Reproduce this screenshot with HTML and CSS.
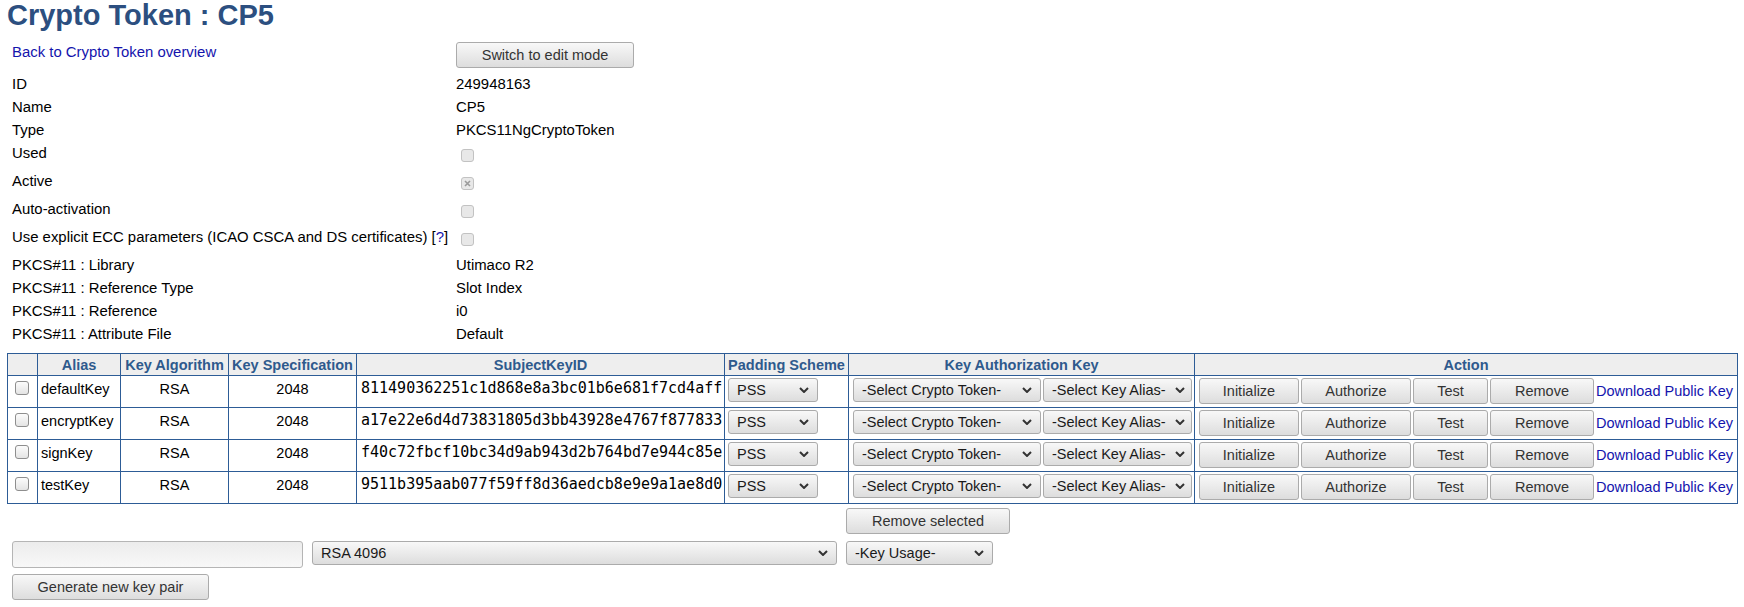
FILE: index.html
```html
<!DOCTYPE html>
<html>
<head>
<meta charset="utf-8">
<title>Crypto Token : CP5</title>
<link rel="stylesheet" href="styles.css">
</head>
<body>
<h1 class="title">Crypto Token : CP5</h1>

<div class="info">
  <div class="lbl"><a href="#">Back to Crypto Token overview</a></div>
  <div class="val"><button class="btn btn-edit">Switch to edit mode</button></div>

  <div class="lbl">ID</div><div class="val">249948163</div>
  <div class="lbl">Name</div><div class="val">CP5</div>
  <div class="lbl">Type</div><div class="val">PKCS11NgCryptoToken</div>

  <div class="lbl">Used</div><div class="val cbv"><span class="chk dis"></span></div>
  <div class="lbl">Active</div><div class="val cbv"><span class="chk dis"><svg width="7" height="7" viewBox="0 0 7 7"><path d="M1 1L6 6M6 1L1 6" stroke="#9a9a9a" stroke-width="1.6"/></svg></span></div>
  <div class="lbl">Auto-activation</div><div class="val cbv"><span class="chk dis"></span></div>
  <div class="lbl">Use explicit ECC parameters (ICAO CSCA and DS certificates) [<a href="#">?</a>]</div><div class="val cbv"><span class="chk dis"></span></div>

  <div class="lbl">PKCS#11 : Library</div><div class="val">Utimaco R2</div>
  <div class="lbl">PKCS#11 : Reference Type</div><div class="val">Slot Index</div>
  <div class="lbl">PKCS#11 : Reference</div><div class="val">i0</div>
  <div class="lbl">PKCS#11 : Attribute File</div><div class="val">Default</div>
</div>

<table class="keys">
  <colgroup>
    <col class="w0"><col class="w1"><col class="w2"><col class="w3"><col class="w4"><col class="w5"><col class="w6"><col class="w7">
  </colgroup>
  <thead>
    <tr>
      <th></th><th>Alias</th><th>Key Algorithm</th><th>Key Specification</th><th>SubjectKeyID</th><th>Padding Scheme</th><th>Key Authorization Key</th><th>Action</th>
    </tr>
  </thead>
  <tbody>
    <tr>
      <td class="c-chk"><span class="chk"></span></td>
      <td class="c-txt">defaultKey</td>
      <td class="c-txt c-center">RSA</td>
      <td class="c-txt c-center">2048</td>
      <td class="c-mono">811490362251c1d868e8a3bc01b6e681f7cd4aff</td>
      <td class="c-ctl"><div class="row pad"><span class="sel s-pss"><select><option>PSS</option></select><svg class="chev" width="10" height="6" viewBox="0 0 10 6"><path d="M1 1L5 5L9 1" fill="none" stroke="#333" stroke-width="2"/></svg></span></div></td>
      <td class="c-ctl"><div class="row auth"><span class="sel s-tok"><select><option>-Select Crypto Token-</option></select><svg class="chev" width="10" height="6" viewBox="0 0 10 6"><path d="M1 1L5 5L9 1" fill="none" stroke="#333" stroke-width="2"/></svg></span><span class="sel s-ali"><select><option>-Select Key Alias-</option></select><svg class="chev" width="10" height="6" viewBox="0 0 10 6"><path d="M1 1L5 5L9 1" fill="none" stroke="#333" stroke-width="2"/></svg></span></div></td>
      <td class="c-ctl"><div class="row act"><button class="btn b-init">Initialize</button><button class="btn b-auth">Authorize</button><button class="btn b-test">Test</button><button class="btn b-rem">Remove</button><a href="#" class="dl">Download Public Key</a></div></td>
    </tr>
    <tr>
      <td class="c-chk"><span class="chk"></span></td>
      <td class="c-txt">encryptKey</td>
      <td class="c-txt c-center">RSA</td>
      <td class="c-txt c-center">2048</td>
      <td class="c-mono">a17e22e6d4d73831805d3bb43928e4767f877833</td>
      <td class="c-ctl"><div class="row pad"><span class="sel s-pss"><select><option>PSS</option></select><svg class="chev" width="10" height="6" viewBox="0 0 10 6"><path d="M1 1L5 5L9 1" fill="none" stroke="#333" stroke-width="2"/></svg></span></div></td>
      <td class="c-ctl"><div class="row auth"><span class="sel s-tok"><select><option>-Select Crypto Token-</option></select><svg class="chev" width="10" height="6" viewBox="0 0 10 6"><path d="M1 1L5 5L9 1" fill="none" stroke="#333" stroke-width="2"/></svg></span><span class="sel s-ali"><select><option>-Select Key Alias-</option></select><svg class="chev" width="10" height="6" viewBox="0 0 10 6"><path d="M1 1L5 5L9 1" fill="none" stroke="#333" stroke-width="2"/></svg></span></div></td>
      <td class="c-ctl"><div class="row act"><button class="btn b-init">Initialize</button><button class="btn b-auth">Authorize</button><button class="btn b-test">Test</button><button class="btn b-rem">Remove</button><a href="#" class="dl">Download Public Key</a></div></td>
    </tr>
    <tr>
      <td class="c-chk"><span class="chk"></span></td>
      <td class="c-txt">signKey</td>
      <td class="c-txt c-center">RSA</td>
      <td class="c-txt c-center">2048</td>
      <td class="c-mono">f40c72fbcf10bc34d9ab943d2b764bd7e944c85e</td>
      <td class="c-ctl"><div class="row pad"><span class="sel s-pss"><select><option>PSS</option></select><svg class="chev" width="10" height="6" viewBox="0 0 10 6"><path d="M1 1L5 5L9 1" fill="none" stroke="#333" stroke-width="2"/></svg></span></div></td>
      <td class="c-ctl"><div class="row auth"><span class="sel s-tok"><select><option>-Select Crypto Token-</option></select><svg class="chev" width="10" height="6" viewBox="0 0 10 6"><path d="M1 1L5 5L9 1" fill="none" stroke="#333" stroke-width="2"/></svg></span><span class="sel s-ali"><select><option>-Select Key Alias-</option></select><svg class="chev" width="10" height="6" viewBox="0 0 10 6"><path d="M1 1L5 5L9 1" fill="none" stroke="#333" stroke-width="2"/></svg></span></div></td>
      <td class="c-ctl"><div class="row act"><button class="btn b-init">Initialize</button><button class="btn b-auth">Authorize</button><button class="btn b-test">Test</button><button class="btn b-rem">Remove</button><a href="#" class="dl">Download Public Key</a></div></td>
    </tr>
    <tr>
      <td class="c-chk"><span class="chk"></span></td>
      <td class="c-txt">testKey</td>
      <td class="c-txt c-center">RSA</td>
      <td class="c-txt c-center">2048</td>
      <td class="c-mono">9511b395aab077f59ff8d36aedcb8e9e9a1ae8d0</td>
      <td class="c-ctl"><div class="row pad"><span class="sel s-pss"><select><option>PSS</option></select><svg class="chev" width="10" height="6" viewBox="0 0 10 6"><path d="M1 1L5 5L9 1" fill="none" stroke="#333" stroke-width="2"/></svg></span></div></td>
      <td class="c-ctl"><div class="row auth"><span class="sel s-tok"><select><option>-Select Crypto Token-</option></select><svg class="chev" width="10" height="6" viewBox="0 0 10 6"><path d="M1 1L5 5L9 1" fill="none" stroke="#333" stroke-width="2"/></svg></span><span class="sel s-ali"><select><option>-Select Key Alias-</option></select><svg class="chev" width="10" height="6" viewBox="0 0 10 6"><path d="M1 1L5 5L9 1" fill="none" stroke="#333" stroke-width="2"/></svg></span></div></td>
      <td class="c-ctl"><div class="row act"><button class="btn b-init">Initialize</button><button class="btn b-auth">Authorize</button><button class="btn b-test">Test</button><button class="btn b-rem">Remove</button><a href="#" class="dl">Download Public Key</a></div></td>
    </tr>
  </tbody>
</table>

<div class="keygen">
  <div class="kg-empty"></div>
  <div class="kg-empty"></div>
  <div><button class="btn btn-remsel">Remove selected</button></div>

  <div><input class="txt" type="text"></div>
  <div><span class="sel s-rsa"><select><option>RSA 4096</option></select><svg class="chev" width="10" height="6" viewBox="0 0 10 6"><path d="M1 1L5 5L9 1" fill="none" stroke="#333" stroke-width="2"/></svg></span></div>
  <div><span class="sel s-use"><select><option>-Key Usage-</option></select><svg class="chev" width="10" height="6" viewBox="0 0 10 6"><path d="M1 1L5 5L9 1" fill="none" stroke="#333" stroke-width="2"/></svg></span></div>

  <div class="kg-gen"><button class="btn btn-gen">Generate new key pair</button></div>
</div>
</body>
</html>
```

FILE: styles.css
```css
body {
  margin: 0;
  background: #ffffff;
  color: #000000;
  font-family: "Liberation Sans", Arial, sans-serif;
  font-size: 14.5px;
}

a {
  color: #1414ad;
  text-decoration: none;
}

.title {
  margin: 0;
  padding-left: 7px;
  font-size: 29px;
  line-height: 30px;
  font-weight: bold;
  color: #2c4f80;
}

/* info block */
.info {
  display: grid;
  grid-template-columns: 444px 1fr;
  grid-template-rows: 32px 23px 23px 23px 28px 28px 28px 28px 23px 23px 23px 23px;
  padding: 11px 0 0 12px;
  font-size: 14.9px;
  line-height: 23px;
}

.info .val {
  white-space: nowrap;
}

.btn-edit {
  width: 178px;
  margin-top: 1px;
}

.cbv {
  padding-top: 7px;
  padding-left: 5px;
}

/* checkboxes */
.chk {
  display: block;
  box-sizing: border-box;
  width: 13px;
  height: 13px;
  border: 1px solid #8e8e8e;
  border-radius: 3px;
  background: linear-gradient(#fcfcfc, #e4e4e4);
}

.chk.dis {
  border-color: #c2c2c2;
  background: #e8e8e8;
  display: flex;
  align-items: center;
  justify-content: center;
}

/* buttons */
.btn {
  box-sizing: border-box;
  height: 26px;
  padding: 0 8px;
  font-family: "Liberation Sans", Arial, sans-serif;
  font-size: 14.5px;
  color: #333333;
  border: 1px solid #ababab;
  border-radius: 3px;
  background: linear-gradient(#f8f8f8, #dddddd);
  cursor: pointer;
}

/* selects */
.sel {
  position: relative;
  display: inline-block;
  height: 24px;
}

.sel select {
  box-sizing: border-box;
  width: 100%;
  height: 24px;
  margin: 0;
  padding: 0 20px 0 8px;
  appearance: none;
  -webkit-appearance: none;
  font-family: "Liberation Sans", Arial, sans-serif;
  font-size: 14.5px;
  color: #1a1a1a;
  border: 1px solid #ababab;
  border-radius: 3px;
  background: linear-gradient(#f8f8f8, #dddddd);
}

.sel .chev {
  position: absolute;
  right: 9px;
  top: 9px;
  pointer-events: none;
}

.s-pss { width: 90px; }
.s-tok { width: 188px; }
.s-ali { width: 149px; }
.s-ali .chev { right: 7px; }
.s-rsa { width: 525px; }
.s-use { width: 147px; }

/* table */
.keys {
  margin: 7px 0 0 7px;
  width: 1731px;
  table-layout: fixed;
  border-collapse: collapse;
  border: 1px solid #2d5c96;
}

.w0 { width: 30px; }
.w1 { width: 83px; }
.w2 { width: 108px; }
.w3 { width: 128px; }
.w4 { width: 368px; }
.w5 { width: 124px; }
.w6 { width: 346px; }
.w7 { width: 543px; }

.keys th,
.keys td {
  border: 1px solid #2d5c96;
  padding: 0;
  white-space: nowrap;
  overflow: hidden;
}

.keys th {
  height: 21px;
  background: #eeeeee;
  color: #2e5a8d;
  font-weight: bold;
  text-align: center;
  line-height: 18px;
}

.keys tbody tr {
  height: 32px;
}

.keys td {
  vertical-align: top;
}

.c-chk .chk {
  width: 14px;
  height: 14px;
  margin: 5px 0 0 7px;
}

.c-txt {
  padding: 4px 3px 0 !important;
  line-height: 18px;
}

.c-center {
  text-align: center;
}

.c-mono {
  padding: 3px 3px 0 4px !important;
  font-family: "DejaVu Sans Mono", "Liberation Mono", monospace;
  font-size: 15px;
  line-height: 18px;
}

.row {
  display: flex;
  align-items: flex-start;
  padding-top: 2px;
}

.pad { padding-left: 3px; }
.auth { padding-left: 4px; gap: 2px; }
.act { padding-left: 4px; gap: 2px; align-items: center; }

.b-init { width: 100px; }
.b-auth { width: 110px; }
.b-test { width: 75px; }
.b-rem { width: 104px; }

.dl {
  line-height: 26px;
  white-space: nowrap;
}

/* key generation */
.keygen {
  display: grid;
  grid-template-columns: 291px 525px auto;
  column-gap: 9px;
  padding-left: 12px;
  margin-top: 4px;
  align-items: start;
}

.btn-remsel {
  width: 164px;
  margin-bottom: 7px;
}

.txt {
  box-sizing: border-box;
  width: 291px;
  height: 27px;
  margin: 0;
  padding: 0 6px;
  border: 1px solid #b5b5b5;
  border-radius: 3px;
  background: linear-gradient(#ececec, #f8f8f8);
  font-family: "Liberation Sans", Arial, sans-serif;
  font-size: 14.5px;
}

.kg-gen {
  grid-column: 1 / 2;
  margin-top: 6px;
}

.btn-gen {
  width: 197px;
}
```
